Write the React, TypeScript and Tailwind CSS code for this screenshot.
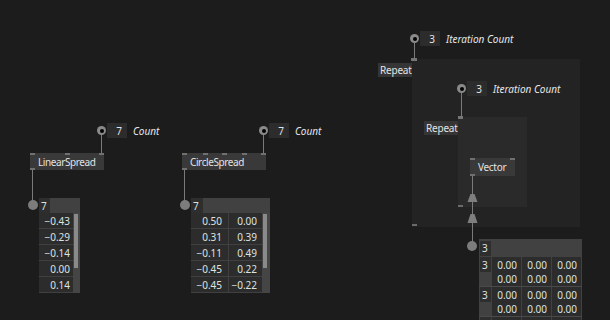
import React from 'react';

const linearValues = ['−0.43', '−0.29', '−0.14', '0.00', '0.14'];
const circleValues = [
  ['0.50', '0.00'],
  ['0.31', '0.39'],
  ['−0.11', '0.49'],
  ['−0.45', '0.22'],
  ['−0.45', '−0.22'],
];

function IOBox({ className, value, label }: { className: string; value: string; label: string }) {
  return (
    <div className={`absolute flex h-[15px] items-center ${className}`}>
      <span className="flex h-[9px] w-[9px] items-center justify-center rounded-full bg-[#8a8a8a]">
        <span className="h-[4px] w-[4px] rounded-full bg-black" />
      </span>
      <span className="ml-[1px] flex h-[15px] w-[20px] items-center justify-end bg-[#2c2c2c] pr-[5px] text-[#e4e4e4]">
        {value}
      </span>
      <span className="ml-[6px] italic text-[#e6e6e6]">{label}</span>
    </div>
  );
}

function Pin({ className }: { className: string }) {
  return <span className={`absolute h-[2px] w-[5px] bg-[#707070] ${className}`} />;
}

function OutPin({ className }: { className: string }) {
  return <span className={`absolute h-[10px] w-[10px] rounded-full bg-[#7c7c7c] ${className}`} />;
}

// region label sits left of the region, both in one row
function RepeatRegion({ className, labelTop, children }: { className: string; labelTop: string; children?: React.ReactNode }) {
  return (
    <div className={`absolute flex items-start ${className}`}>
      <div className={`flex h-[14px] w-[34px] items-center bg-[#353535] pl-[2px] tracking-[-0.2px] text-[#e4e4e4] ${labelTop}`}>
        Repeat
      </div>
      {children}
    </div>
  );
}

export default function App() {
  return (
    <div className="relative h-[320px] w-[610px] overflow-hidden bg-[#1c1c1c] font-['Noto_Sans',sans-serif] text-[10px] leading-none">
      {/* Repeat regions */}
      <RepeatRegion className="left-[378px] top-[59px]" labelTop="mt-[4px]">
        <div className="relative h-[168px] w-[168px] bg-[#232323]">
          <span className="absolute -left-[1px] -top-[1px] h-[3px] w-[6px] bg-[#757575]" />
          <span className="absolute bottom-[1px] left-0 h-[2px] w-[5px] bg-[#6a6a6a]" />
        </div>
      </RepeatRegion>
      <RepeatRegion className="left-[424px] top-[117px]" labelTop="mt-[4px]">
        <div className="relative h-[90px] w-[69px] bg-[#2a2a2a]">
          <span className="absolute -top-[1px] left-0 h-[3px] w-[5px] bg-[#757575]" />
          <span className="absolute bottom-0 left-0 h-[2px] w-[5px] bg-[#6a6a6a]" />
        </div>
      </RepeatRegion>

      {/* Links */}
      <svg className="pointer-events-none absolute inset-0" width="610" height="320">
        <g stroke="#7a7a7a" strokeWidth="1">
          <line x1="101.5" y1="134" x2="101.5" y2="153" />
          <line x1="32.5" y1="170" x2="32.5" y2="202" />
          <line x1="263.5" y1="134" x2="263.5" y2="153" />
          <line x1="184.5" y1="170" x2="184.5" y2="202" />
          <line x1="414.5" y1="42" x2="414.5" y2="58" />
          <line x1="461.5" y1="92" x2="461.5" y2="117" />
          <line x1="472.5" y1="176" x2="472.5" y2="243" />
        </g>
        <g fill="#7e7e7e">
          <polygon points="470.5,194 474.5,194 477.5,202 467.5,202" />
          <polygon points="470.5,214 474.5,214 477.5,223 467.5,223" />
        </g>
      </svg>

      {/* IO boxes */}
      <IOBox className="left-[97px] top-[123px]" value="7" label="Count" />
      <IOBox className="left-[259px] top-[123px]" value="7" label="Count" />
      <IOBox className="left-[410px] top-[31px]" value="3" label="Iteration Count" />
      <IOBox className="left-[457px] top-[81px]" value="3" label="Iteration Count" />

      {/* LinearSpread node */}
      <div className="absolute left-[30px] top-[153px] flex h-[17px] w-[74px] items-center bg-[#393939] pl-[8px] tracking-[-0.4px] text-[#e2e2e2]">
        LinearSpread
        <Pin className="left-0 top-0" />
        <Pin className="left-[35px] top-0" />
        <Pin className="right-0 top-0" />
        <Pin className="bottom-0 left-0" />
      </div>

      {/* CircleSpread node */}
      <div className="absolute left-[182px] top-[153px] flex h-[17px] w-[84px] items-center bg-[#393939] pl-[8px] tracking-[-0.4px] text-[#e2e2e2]">
        CircleSpread
        <Pin className="left-0 top-0" />
        <Pin className="left-[21px] top-0" />
        <Pin className="left-[40px] top-0" />
        <Pin className="left-[60px] top-0" />
        <Pin className="right-0 top-0" />
        <Pin className="bottom-0 left-0" />
      </div>

      {/* Vector node */}
      <div className="absolute left-[470px] top-[158px] flex h-[18px] w-[45px] items-center bg-[#393939] pl-[8px] tracking-[-0.3px] text-[#e2e2e2]">
        Vector
        <Pin className="left-0 top-0" />
        <Pin className="right-0 top-0" />
        <Pin className="bottom-0 left-0" />
      </div>

      {/* Output pins */}
      <OutPin className="left-[28px] top-[200px]" />
      <OutPin className="left-[180px] top-[200px]" />
      <OutPin className="left-[467px] top-[241px]" />

      {/* LinearSpread output */}
      <div className="absolute left-[39px] top-[198px] w-[41px] bg-[#414141] text-[#dde3e1]">
        <div className="flex h-[15px] items-stretch">
          <span className="flex w-[11px] items-center bg-[#2e2e2e] pl-[2px]">7</span>
        </div>
        <div className="flex">
          <div className="w-[34px]">
            {linearValues.map((v) => (
              <div key={v} className="flex h-[16px] items-center justify-end border-b border-[#404040] bg-[#2c2c2c] pr-[3px]">
                {v}
              </div>
            ))}
          </div>
          <div className="relative w-[7px] bg-[#454545]">
            <span className="absolute left-[1px] top-[1px] h-[54px] w-[4px] bg-[#8a8a8a]" />
          </div>
        </div>
      </div>

      {/* CircleSpread output */}
      <div className="absolute left-[191px] top-[198px] w-[79px] bg-[#414141] text-[#dde3e1]">
        <div className="flex h-[15px] items-stretch">
          <span className="flex w-[12px] items-center bg-[#2e2e2e] pl-[2px]">7</span>
        </div>
        <div className="flex">
          <div className="w-[71px]">
            {circleValues.map(([a, b], i) => (
              <div key={i} className="flex h-[16px] border-b border-[#404040] bg-[#2c2c2c]">
                <span className="flex w-[38px] items-center justify-end border-r border-[#404040] pr-[6px]">{a}</span>
                <span className="flex flex-1 items-center justify-end pr-[5px]">{b}</span>
              </div>
            ))}
          </div>
          <div className="relative w-[8px] bg-[#454545]">
            <span className="absolute left-[1px] top-[1px] h-[54px] w-[4px] bg-[#8a8a8a]" />
          </div>
        </div>
      </div>

      {/* Repeat output */}
      <div className="absolute left-[479px] top-[239px] h-[90px] w-[103px] bg-[#414141] text-[#dde3e1]">
        <div className="flex h-[18px] items-center pl-[1px]">
          <span className="flex h-[15px] w-[11px] items-center bg-[#2e2e2e] pl-[2px]">3</span>
        </div>
        {[0, 1, 2].map((g) => (
          <div key={g} className="flex border-b border-[#4a4a4a]">
            <div className="w-[13px] pl-[1px]">
              <span className="flex h-[15px] w-[11px] items-center bg-[#2e2e2e] pl-[2px]">3</span>
            </div>
            {[0, 1, 2].map((c) => (
              <div key={c} className="mr-[1px] flex flex-1 flex-col bg-[#2c2c2c] pr-[4px]">
                <span className="flex h-[15px] items-center justify-end">0.00</span>
                <span className="flex h-[14px] items-center justify-end">0.00</span>
              </div>
            ))}
          </div>
        ))}
      </div>
    </div>
  );
}
